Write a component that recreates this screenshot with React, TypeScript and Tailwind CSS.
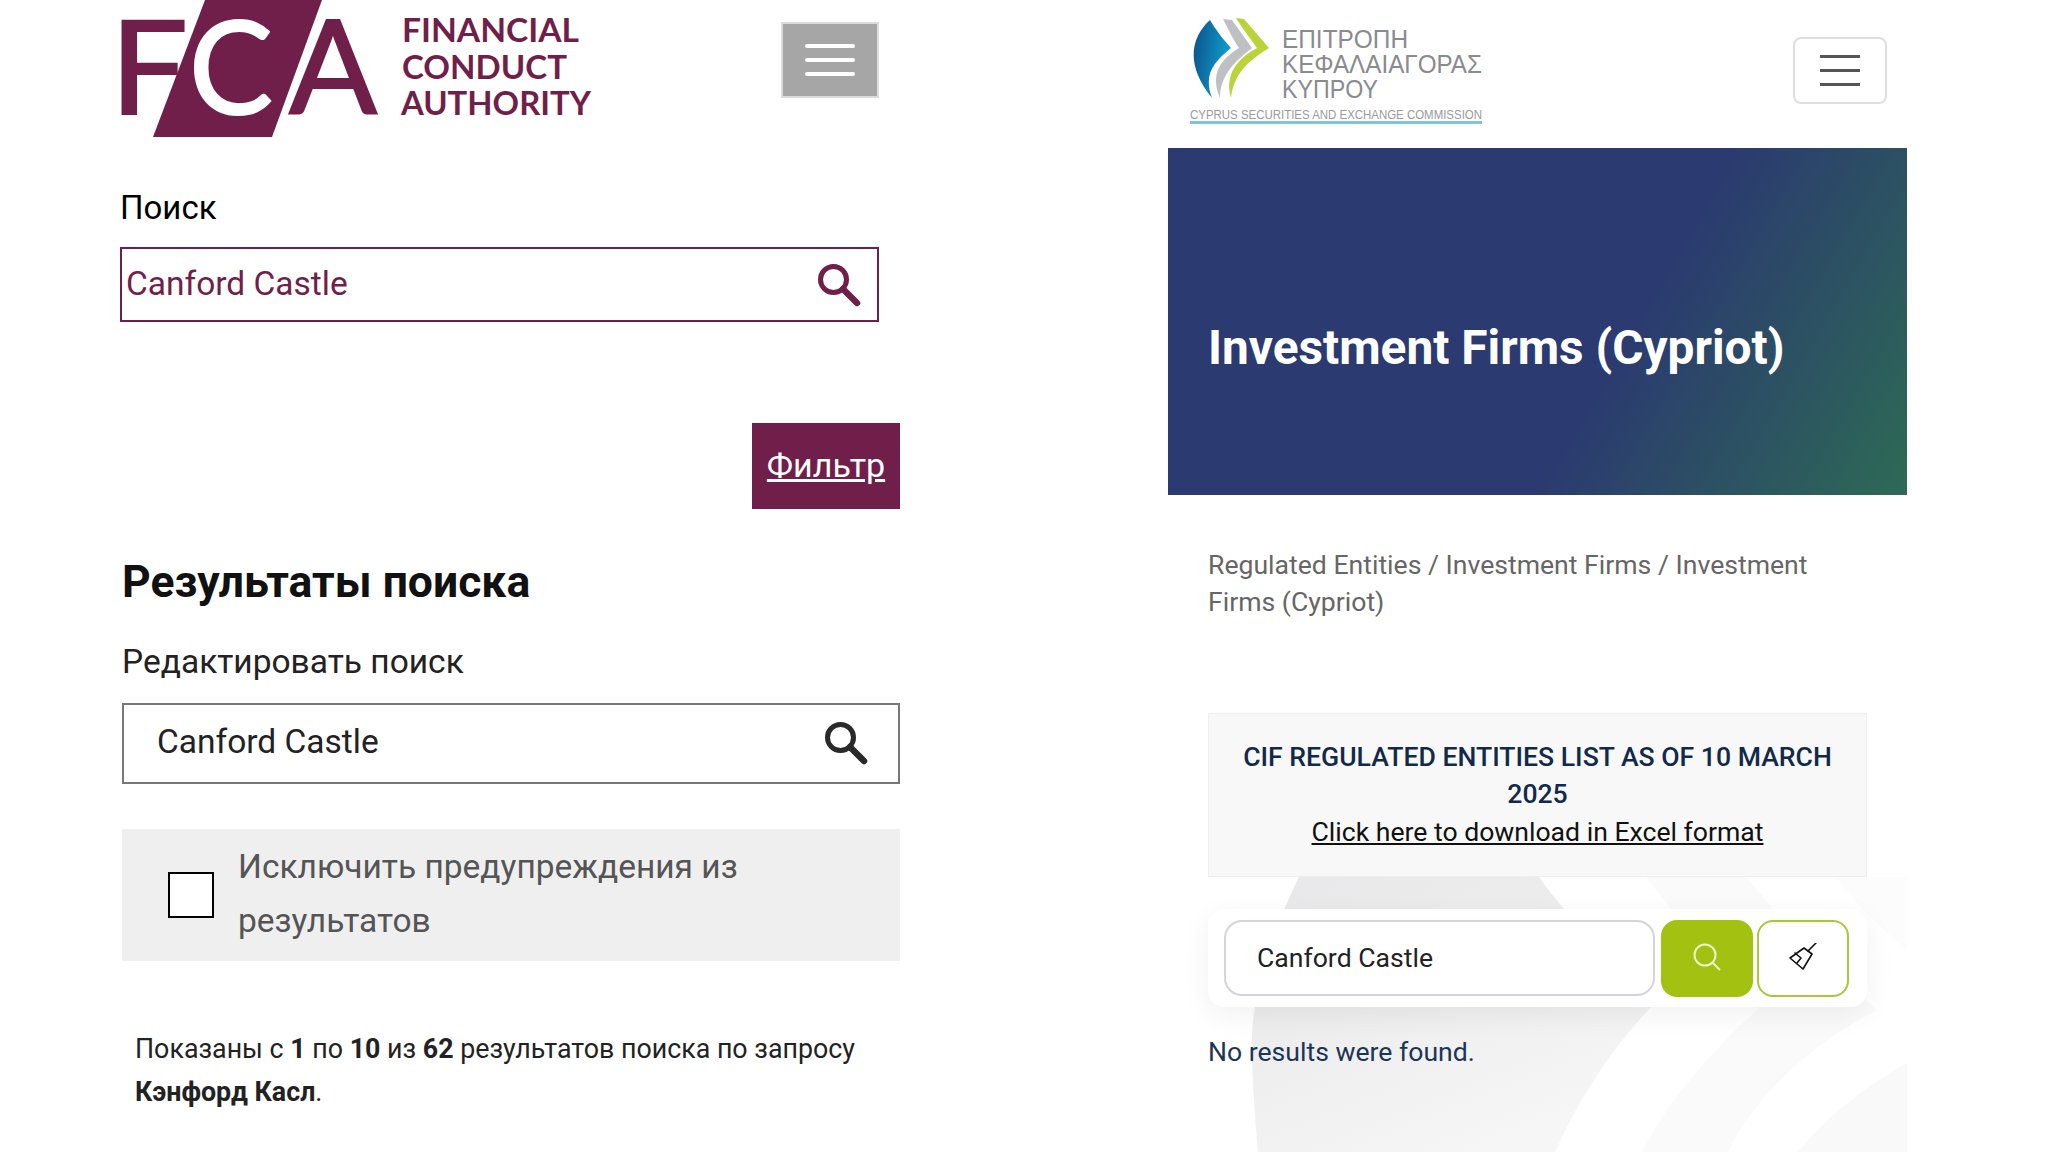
import React from "react";

const Mag = ({ color, className }: { color: string; className: string }) => (
  <svg viewBox="0 0 44 44" className={className} fill="none">
    <circle cx="16.5" cy="16.5" r="13" stroke={color} strokeWidth="5" />
    <path d="M26 26 L40 40" stroke={color} strokeWidth="6.5" strokeLinecap="round" />
  </svg>
);

const FcaLogo = () => (
  <svg viewBox="0 0 475 137" className="w-[475px] h-[137px] block">
    <polygon points="85,0 202,0 152,137 33,137" fill="#701f4a" />
    <g fontFamily="Lato, sans-serif" fontSize="130" fontWeight="400" strokeWidth="2">
      <text x="-10" y="114" fill="#701f4a" stroke="#701f4a" textLength="78" lengthAdjust="spacingAndGlyphs">F</text>
      <text x="69" y="114" fill="#ffffff" stroke="#ffffff" textLength="84" lengthAdjust="spacingAndGlyphs">C</text>
      <text x="169" y="114" fill="#701f4a" stroke="#701f4a" textLength="88" lengthAdjust="spacingAndGlyphs">A</text>
    </g>
    <g fontFamily="Lato, sans-serif" fontSize="32" fontWeight="700" fill="#701f4a">
      <text x="282" y="42" textLength="177" lengthAdjust="spacingAndGlyphs">FINANCIAL</text>
      <text x="282" y="79" textLength="165" lengthAdjust="spacingAndGlyphs">CONDUCT</text>
      <text x="281" y="115" textLength="190" lengthAdjust="spacingAndGlyphs">AUTHORITY</text>
    </g>
  </svg>
);

const CysecLogo = () => (
  <svg viewBox="0 0 296 130" className="w-[296px] h-[130px] block">
    <defs>
      <linearGradient id="blue" x1="0" y1="0" x2="1" y2="0.3">
        <stop offset="0" stopColor="#0d4f85" />
        <stop offset="1" stopColor="#0c9fd2" />
      </linearGradient>
    </defs>
    <path d="M20 20 C2 36 -6 64 22 98 C13 74 24 62 41 48 C32 38 26 30 20 20 Z" fill="url(#blue)" />
    <path d="M33 19 L42 20 L62 48 C44 62 30 76 30 98 C20 74 30 60 49 48 C42 38 38 28 33 19 Z" fill="#bfc0c4" />
    <path d="M46 18 L54 19 L79 48 C60 60 44 72 41 98 C34 74 48 58 67 48 C60 38 52 28 46 18 Z" fill="#bcd23a" />
    <g fontFamily="Liberation Sans, sans-serif" fontSize="25" fill="#8a8b8e">
      <text x="92" y="48" textLength="126" lengthAdjust="spacingAndGlyphs">ΕΠΙΤΡΟΠΗ</text>
      <text x="92" y="73" textLength="200" lengthAdjust="spacingAndGlyphs">ΚΕΦΑΛΑΙΑΓΟΡΑΣ</text>
      <text x="92" y="98" textLength="96" lengthAdjust="spacingAndGlyphs">ΚΥΠΡΟΥ</text>
    </g>
    <text x="0" y="119" fontFamily="Liberation Sans, sans-serif" fontSize="13" fill="#999a9c" textLength="292" lengthAdjust="spacingAndGlyphs">CYPRUS SECURITIES AND EXCHANGE COMMISSION</text>
    <rect x="0" y="121" width="292" height="3" fill="#7fc4dc" />
  </svg>
);

const Broom = () => (
  <svg viewBox="0 0 30 30" className="w-[30px] h-[30px]" fill="none" stroke="#111" strokeWidth="1.6" strokeLinejoin="round" strokeLinecap="round">
    <path d="M28 0 L20 8" />
    <path d="M16 5 L24 11 L15 26 L2 15 Z" />
    <path d="M7 10 L13 15 L9 20" />
  </svg>
);

export default function App() {
  return (
    <div className="w-[2048px] h-[1152px] bg-white flex overflow-hidden font-['Roboto',sans-serif]">
      <div className="w-[780px] ml-[120px] flex flex-col shrink-0">
        <div className="h-[137px] w-[759px] flex items-start justify-between">
          <FcaLogo />
          <button className="mt-[22px] w-[98px] h-[76px] bg-[#a6a6a6] border-2 border-[#dcdcdc] flex flex-col items-center justify-center gap-[10px]">
            <span className="block w-[50px] h-[4px] rounded-sm bg-white" />
            <span className="block w-[50px] h-[4px] rounded-sm bg-white" />
            <span className="block w-[50px] h-[4px] rounded-sm bg-white" />
          </button>
        </div>
        <div className="mt-[51px] text-[33px] leading-[40px] text-black">Поиск</div>
        <div className="mt-[19px] w-[759px] h-[75px] border-2 border-[#701f4a] flex items-center justify-between pl-[4px] pr-[16px] text-[33.5px] text-[#701f4a]">
          <span className="mb-[1px]">Canford Castle</span>
          <Mag color="#701f4a" className="w-[44px] h-[44px]" />
        </div>
        <button className="mt-[101px] self-end w-[148px] h-[86px] pb-[2px] bg-[#701f4a] text-white text-[34px] underline">Фильтр</button>
        <h1 className="mt-[48px] ml-[2px] text-[44.5px] leading-[50px] font-bold text-[#111]">Результаты поиска</h1>
        <div className="mt-[35px] ml-[2px] text-[33.5px] leading-[40px] text-[#222]">Редактировать поиск</div>
        <div className="mt-[21px] ml-[2px] h-[81px] border-2 border-[#777] flex items-center justify-between pl-[33px] pr-[30px] text-[33.5px] text-[#222]">
          <span className="mb-[2px]">Canford Castle</span>
          <Mag color="#2a2a2a" className="w-[44px] h-[44px] mb-[2px]" />
        </div>
        <div className="mt-[45px] ml-[2px] h-[132px] bg-[#efefef] flex items-center pl-[46px]">
          <div className="w-[46px] h-[46px] bg-white border-2 border-black shrink-0" />
          <div className="ml-[24px] w-[560px] mb-[2px] text-[33.5px] leading-[54px] text-[#555]">Исключить предупреждения из результатов</div>
        </div>
        <p className="mt-[67px] ml-[15px] w-[750px] text-[26.8px] leading-[43px] text-[#222]">
          Показаны с <b>1</b> по <b>10</b> из <b>62</b> результатов поиска по запросу <b>Кэнфорд Касл</b>.
        </p>
      </div>

      <div className="relative w-[739px] ml-[268px] shrink-0">
        <svg className="absolute left-0 top-0 w-[739px] h-[1152px]" viewBox="0 0 739 1152">
          <defs>
            <linearGradient id="bg1" x1="0" y1="0" x2="0.6" y2="1">
              <stop offset="0" stopColor="#e8e8ea" />
              <stop offset="0.5" stopColor="#eeeeee" />
              <stop offset="1" stopColor="#f6f6f6" />
            </linearGradient>
          </defs>
          <path d="M131 877 C105 930 80 1000 84 1060 C85 1095 88 1125 90 1152 L387 1152 C415 1090 450 1040 490 1000 C445 960 405 925 371 877 Z" fill="url(#bg1)" />
          <path d="M478 877 C510 920 550 965 592 1007 C545 1050 500 1100 474 1152 L560 1152 C590 1090 650 1040 709 1010 C665 970 615 925 579 877 Z" fill="#fafafa" />
          <path d="M630 1152 C660 1115 700 1085 739 1063 L739 1152 Z" fill="#f9f9f9" />
          <path d="M667 877 C690 905 715 930 739 950 L739 877 Z" fill="#fcfcfc" />
        </svg>
        <div className="relative flex flex-col">
          <div className="h-[148px] flex items-start">
            <div className="ml-[22px]"><CysecLogo /></div>
            <button className="ml-[307px] mt-[37px] w-[94px] h-[67px] bg-white border-2 border-[#dedede] rounded-[8px] flex flex-col items-center justify-center gap-[11px]">
              <span className="block w-[40px] h-[3px] bg-[#555]" />
              <span className="block w-[40px] h-[3px] bg-[#555]" />
              <span className="block w-[40px] h-[3px] bg-[#555]" />
            </button>
          </div>
          <div className="h-[347px] pl-[40px] pt-[54px] flex items-center bg-[linear-gradient(120deg,#2b3a70_0%,#2b3a70_60%,#2d6a55_100%)]">
            <h2 className="text-[47.8px] font-bold text-white">Investment Firms (Cypriot)</h2>
          </div>
          <div className="mt-[51px] mx-[40px] text-[26.6px] leading-[37px] text-[#666]">
            Regulated Entities / Investment Firms / Investment Firms (Cypriot)
          </div>
          <div className="mt-[93px] ml-[40px] w-[659px] h-[164px] bg-[#f8f8f8] border border-[#eeeeee] px-[20px] pt-[24px] text-center text-[26.6px] leading-[37px]">
            <div className="font-medium text-[#12294a]">CIF REGULATED ENTITIES LIST AS OF 10 MARCH 2025</div>
            <a className="underline text-[#111] block mt-[1px]">Click here to download in Excel format</a>
          </div>
          <div className="mt-[32px] ml-[40px] w-[659px] h-[98px] bg-white rounded-[16px] shadow-[0_8px_30px_rgba(0,0,0,0.06)] flex items-center pl-[16px] gap-[6px]">
            <div className="w-[431px] h-[76px] border-2 border-[#d4d5da] rounded-[18px] flex items-center pl-[31px] pb-[1px] text-[26.6px] text-[#222]">Canford Castle</div>
            <button className="w-[92px] h-[77px] bg-[#a3c111] rounded-[16px] flex items-center justify-center">
              <svg viewBox="0 0 30 30" className="w-[30px] h-[30px] mb-[3px]" fill="none" stroke="#eef5c8" strokeWidth="2"><circle cx="13" cy="13" r="10.5" /><path d="M20.5 20.5 L28 28" /></svg>
            </button>
            <button className="w-[92px] h-[77px] -ml-[2px] bg-white border-2 border-[#a9c63c] rounded-[16px] flex items-center justify-center">
              <Broom />
            </button>
          </div>
          <div className="mt-[27px] ml-[40px] text-[26.6px] leading-[36px] text-[#1c3557]">No results were found.</div>
        </div>
      </div>
    </div>
  );
}
